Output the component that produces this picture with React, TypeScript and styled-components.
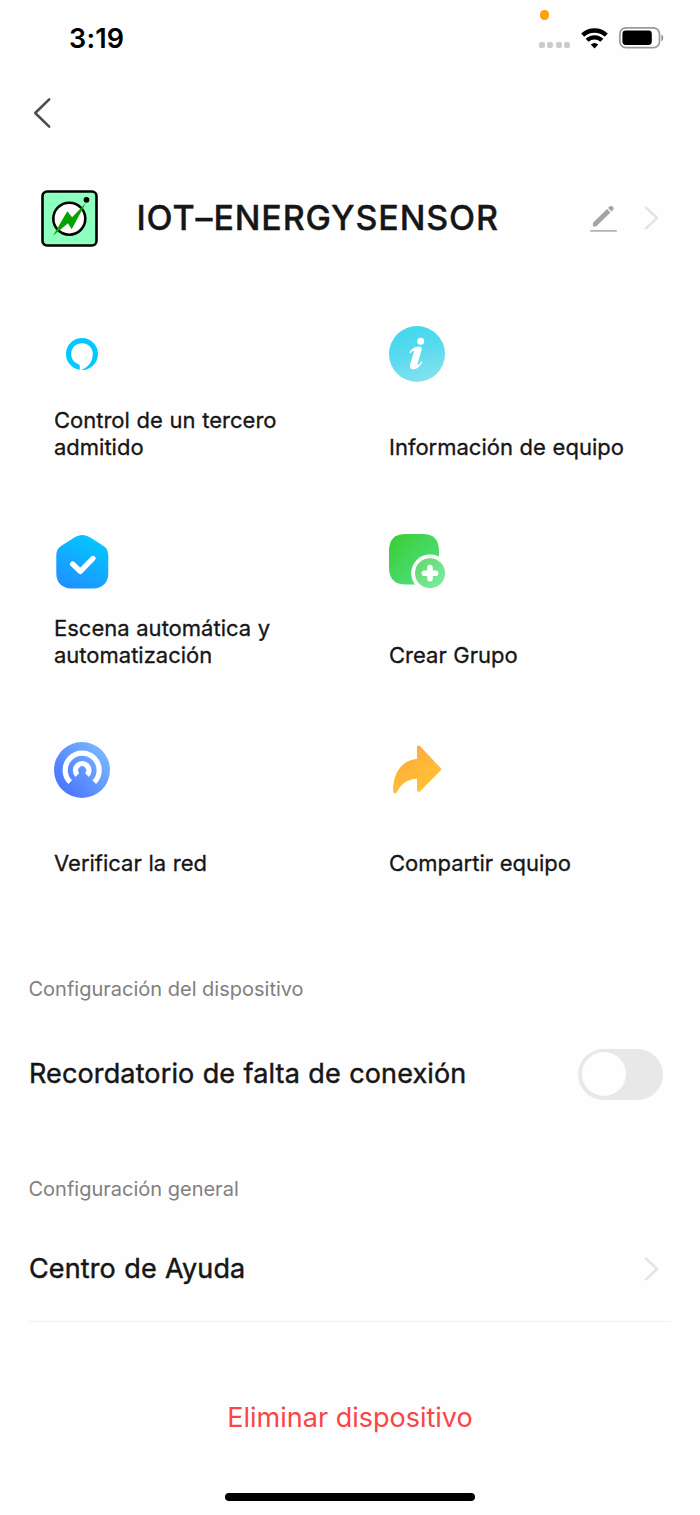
import React from "react";
import styled, { createGlobalStyle } from "styled-components";

const GlobalStyle = createGlobalStyle`
  *, *::before, *::after { box-sizing: border-box; }
  body {
    margin: 0;
    background: #fefefe;
    color: #161616;
    font-family: Inter, "Liberation Sans", sans-serif;
  }
  button {
    border: 0;
    padding: 0;
    background: none;
    color: inherit;
    font: inherit;
    text-align: left;
  }
  svg { display: block; flex: none; overflow: visible; }
`;

const Screen = styled.main`
  display: flex;
  flex-direction: column;
  width: 700px;
  height: 1515px;
  overflow: hidden;
`;

const StatusBar = styled.header`
  position: relative;
  display: flex;
  align-items: center;
  justify-content: space-between;
  height: 76px;
  padding: 0 36px 0 69px;
`;

const Clock = styled.time`
  color: #000;
  font-size: 27px;
  font-weight: 600;
  line-height: 32px;
  letter-spacing: 0.2px;
  padding-top: 2px;
`;

const StatusIcons = styled.div`
  display: flex;
  align-items: center;
  gap: 11px;
`;

const RecordingDot = styled.span`
  position: absolute;
  top: 10px;
  left: 539.5px;
  width: 9.5px;
  height: 9.5px;
  border-radius: 50%;
  background: #ff9f0a;
`;

const SignalDots = styled.span`
  display: flex;
  gap: 2.5px;
  margin-top: 14px;
`;

const SignalDot = styled.i`
  width: 6px;
  height: 6px;
  border-radius: 2px;
  background: #cbcbcb;
`;

const NavBar = styled.nav`
  display: flex;
  align-items: center;
  height: 74px;
  padding-left: 33px;
`;

const DeviceHeader = styled.section`
  display: flex;
  align-items: center;
  height: 136px;
  padding: 0 41px;
`;

const DeviceName = styled.h1`
  flex: 1;
  margin: 0 0 0 38.5px;
  font-size: 34px;
  font-weight: 500;
  line-height: 42px;
  letter-spacing: 0.85px;
  -webkit-text-stroke: 0.35px currentColor;
`;

const EditButton = styled.button`
  margin-right: 28px;
`;

const ActionGrid = styled.section`
  display: grid;
  grid-template-columns: 335px 1fr;
  row-gap: 73px;
  padding: 40px 54px 0;
`;

const Action = styled.button`
  display: flex;
  flex-direction: column;
  justify-content: space-between;
  align-items: flex-start;
  height: 135px;
`;

const ActionLabel = styled.span`
  max-width: 250px;
  font-size: 22px;
  font-weight: 400;
  line-height: 27px;
  word-spacing: 0.5px;
  -webkit-text-stroke: 0.3px currentColor;
`;

const SectionLabel = styled.h2<{ $top: number }>`
  margin: ${(p) => p.$top}px 0 0;
  padding-left: 28.5px;
  color: #808080;
  font-size: 20px;
  font-weight: 400;
  line-height: 26px;
`;

const SettingRow = styled.div<{ $divided?: boolean; $height: number }>`
  display: flex;
  align-items: center;
  justify-content: space-between;
  height: ${(p) => p.$height}px;
  margin: 0 29px 0 28px;
  padding: ${(p) => (p.$divided ? "14px 12px 0 1px" : "0 8px 0 1px")};
  border-bottom: ${(p) => (p.$divided ? "1.5px solid #f1f1f1" : "0")};
`;

const SettingTitle = styled.span`
  font-size: 27px;
  font-weight: 400;
  line-height: 34px;
  letter-spacing: 0.13px;
  word-spacing: 0.6px;
  -webkit-text-stroke: 0.45px currentColor;
`;

const Toggle = styled.button`
  display: flex;
  align-items: center;
  width: 85px;
  height: 51px;
  padding-left: 3.5px;
  border-radius: 26px;
  background: #e8e8e8;
`;

const ToggleKnob = styled.span`
  width: 44px;
  height: 44px;
  border-radius: 50%;
  background: #fefefe;
`;

const RemoveButton = styled.button`
  align-self: center;
  margin-top: 79px;
  color: #fb4545;
  font-size: 27px;
  font-weight: 400;
  line-height: 34px;
`;

const HomeIndicator = styled.div`
  align-self: center;
  width: 250px;
  height: 8px;
  margin-top: 58px;
  border-radius: 4px;
  background: #000;
`;

const WifiIcon = () => (
  <svg width="27" height="21" viewBox="0 0 27 21" fill="none" stroke="#000">
    <path d="M1.7 7.2a17 17 0 0 1 23.6 0" strokeWidth="4.4" />
    <path d="M6.1 12.3a10.6 10.6 0 0 1 14.8 0" strokeWidth="4.2" />
    <path d="M13.5 20.4 9.8 16.6q3.7-3 7.4 0z" fill="#000" stroke="none" />
  </svg>
);

const BatteryIcon = () => (
  <svg width="45" height="22" viewBox="0 0 45 22">
    <rect x="0.9" y="0.9" width="39.6" height="19.8" rx="6" fill="none" stroke="#9a9a9a" strokeWidth="1.7" />
    <rect x="3.4" y="3.6" width="29.4" height="14.4" rx="3.4" fill="#000" />
    <path d="M42.4 7.4c2.4 1 2.4 5.8 0 6.8z" fill="#8c8c8c" />
  </svg>
);

const BackIcon = () => (
  <svg width="18" height="30" viewBox="0 0 18 30" fill="none" stroke="#4b4b4b" strokeWidth="2.5" strokeLinecap="round" strokeLinejoin="round">
    <path d="M16.2 1.4 2.2 15l14 13.6" />
  </svg>
);

const ChevronIcon = () => (
  <svg width="14" height="24" viewBox="0 0 14 24" fill="none" stroke="#e4e4e4" strokeWidth="2.6" strokeLinecap="round" strokeLinejoin="round">
    <path d="M1 1.6 12 12 1 22.4" />
  </svg>
);

const PencilIcon = () => (
  <svg width="27" height="28" viewBox="0 0 27 28">
    <path d="M3.3 18.4 17 4.9l3.5 3.5L6.8 21.8q-.6.6-1.4.6H3.8q-.9 0-.9-.9v-1.7q0-.8.4-1.4z" fill="#a3a3a3" />
    <path d="m18 3.9 1.5-1.4c2.3-1.9 5.3 1.2 3.5 3.4l-1.5 1.5z" fill="#a3a3a3" />
    <rect y="25.9" width="27" height="1.9" rx=".9" fill="#b3b3b3" />
  </svg>
);

const DeviceIcon = () => (
  <svg width="57" height="57" viewBox="0 0 57 57">
    <rect x="1.5" y="1.5" width="54" height="54" rx="4.5" fill="#8dffbf" stroke="#000" strokeWidth="2.6" />
    <circle cx="28.3" cy="28.7" r="16" fill="#fefefe" stroke="#000" strokeWidth="2.6" />
    <path d="M44.8 13 30.7 39.3 27 33.2 12.2 45.6 26.3 21.2l4.8 6z" fill="#00a300" />
    <circle cx="45.5" cy="9.8" r="2.9" fill="#000" />
  </svg>
);

const VoiceIcon = () => (
  <svg width="56" height="56" viewBox="0 0 56 56">
    <path
      d="M25.8 43.85A16 16 0 0 1 28 12A16 16 0 0 1 44 28A16 16 0 0 1 26.7 43.95C33 42.6 38.6 36.5 38.8 28A10.8 10.8 0 0 0 28 17.2A10.8 10.8 0 0 0 17.2 28A10.8 10.8 0 0 0 23.4 37.8L24.9 38.5Q25.8 38.9 25.8 39.9z"
      fill="#05c8fc"
    />
  </svg>
);

const InfoIcon = () => (
  <svg width="56" height="56" viewBox="0 0 56 56">
    <defs>
      <linearGradient id="info" x1=".3" y1=".1" x2=".6" y2="1">
        <stop stopColor="#45d8ee" />
        <stop offset=".4" stopColor="#57daee" />
        <stop offset="1" stopColor="#86e1ee" />
      </linearGradient>
    </defs>
    <circle cx="28" cy="28" r="28" fill="url(#info)" />
    <circle cx="31.7" cy="15.2" r="3.5" fill="#fff" />
    <path d="M20.3 26.6c1.6-3.5 5.7-6.1 9.8-6.2 2.5 0 3.1 1.3 2.5 3.3l-3.9 13.600c-.6 2.300.6 2.300 3.700-1.900l1.100.7c-2.300 4.600-5.300 7.100-8.900 7.100-3.200 0-4.200-2.200-3.400-5L24.700 26.600c.7-2.400-.5-2.400-3.200.6z" fill="#fff" />
  </svg>
);

const SceneIcon = () => (
  <svg width="56" height="56" viewBox="0 0 56 56">
    <defs>
      <linearGradient id="scene" x1=".7" y1="0" x2=".2" y2="1">
        <stop stopColor="#02c9ff" />
        <stop offset="1" stopColor="#208fff" />
      </linearGradient>
    </defs>
    <path d="M2.3 22c0-5 1.6-8 5.500-10.400L20.300 3.500c5.500-3.400 10.500-3.400 16 0l12.500 8.100c3.900 2.400 5.500 5.400 5.500 10.400V39.500c0 9-5.800 14.900-14.800 14.900H17.100c-9 0-14.800-5.900-14.800-14.900z" fill="url(#scene)" />
    <path d="m18.6 30 7.7 7.4 12.6-12.9" fill="none" stroke="#fff" strokeWidth="5.3" strokeLinecap="round" strokeLinejoin="round" />
  </svg>
);

const GroupIcon = () => (
  <svg width="56" height="56" viewBox="0 0 56 56">
    <defs>
      <linearGradient id="group" x1="0" y1="0" x2="1" y2="1">
        <stop stopColor="#3bcb32" />
        <stop offset="1" stopColor="#50e58b" />
      </linearGradient>
      <linearGradient id="groupBadge" x1="0" y1="0" x2="1" y2="1">
        <stop stopColor="#65d667" />
        <stop offset="1" stopColor="#78f0a6" />
      </linearGradient>
    </defs>
    <path d="M0 17C0 5.5 5.5 0 17 0h16c11.5 0 17 5.5 17 17v16.5c0 11.5-5.5 17-17 17H17c-11.5 0-17-5.5-17-17z" fill="url(#group)" />
    <circle cx="41" cy="39.2" r="18.8" fill="#fefefe" />
    <circle cx="41" cy="39.2" r="15" fill="url(#groupBadge)" />
    <path d="M41 33.6v11.2M35.4 39.2h11.2" stroke="#fff" strokeWidth="5.6" strokeLinecap="round" />
  </svg>
);

const NetworkIcon = () => (
  <svg width="56" height="56" viewBox="0 0 56 56">
    <defs>
      <linearGradient id="network" x1=".95" y1=".2" x2=".2" y2=".85">
        <stop stopColor="#78b8ff" />
        <stop offset="1" stopColor="#4d78ff" />
      </linearGradient>
    </defs>
    <circle cx="28" cy="28" r="28" fill="url(#network)" />
    <g fill="none" stroke="#fff">
      <path d="M16.2 40.2a17 17 0 1 1 24 0" strokeWidth="5.2" />
      <path d="M23.4 33a6.7 6.7 0 1 1 9.6 0" strokeWidth="5.4" />
    </g>
  </svg>
);

const ShareIcon = () => (
  <svg width="56" height="56" viewBox="0 0 56 56">
    <defs>
      <linearGradient id="share" x1=".2" y1=".1" x2=".7" y2="1">
        <stop stopColor="#ffaa3b" />
        <stop offset="1" stopColor="#ffc535" />
      </linearGradient>
    </defs>
    <path d="M28 17V5.7c0-2.1 1.9-2.8 3.4-1.3l20.2 21.7c.8.9.8 1.6 0 2.5L31.4 49c-1.5 1.5-3.4.9-3.4-1.2v-11c-8.6.2-15.4 4.400-20 13-1.200 2.500-3.700 2-3.800-.7C3.800 31.500 12.500 18 28 17z" fill="url(#share)" />
  </svg>
);

const actions = [
  { label: "Control de un tercero admitido", Icon: VoiceIcon },
  { label: "Información de equipo", Icon: InfoIcon },
  { label: "Escena automática y automatización", Icon: SceneIcon },
  { label: "Crear Grupo", Icon: GroupIcon },
  { label: "Verificar la red", Icon: NetworkIcon },
  { label: "Compartir equipo", Icon: ShareIcon },
];

export default function App() {
  return (
    <>
      <GlobalStyle />
      <Screen>
        <StatusBar>
          <Clock>3:19</Clock>
          <RecordingDot />
          <StatusIcons>
            <SignalDots>
              {[0, 1, 2, 3].map((n) => (
                <SignalDot key={n} />
              ))}
            </SignalDots>
            <WifiIcon />
            <BatteryIcon />
          </StatusIcons>
        </StatusBar>
        <NavBar>
          <button aria-label="Atrás">
            <BackIcon />
          </button>
        </NavBar>
        <DeviceHeader>
          <DeviceIcon />
          <DeviceName>IOT–ENERGYSENSOR</DeviceName>
          <EditButton aria-label="Editar">
            <PencilIcon />
          </EditButton>
          <ChevronIcon />
        </DeviceHeader>
        <ActionGrid>
          {actions.map(({ label, Icon }) => (
            <Action key={label}>
              <Icon />
              <ActionLabel>{label}</ActionLabel>
            </Action>
          ))}
        </ActionGrid>
        <SectionLabel $top={99}>Configuración del dispositivo</SectionLabel>
        <SettingRow $height={144}>
          <SettingTitle>Recordatorio de falta de conexión</SettingTitle>
          <Toggle role="switch" aria-checked={false} aria-label="Recordatorio de falta de conexión">
            <ToggleKnob />
          </Toggle>
        </SettingRow>
        <SectionLabel $top={30}>Configuración general</SectionLabel>
        <SettingRow $height={120} $divided>
          <SettingTitle>Centro de Ayuda</SettingTitle>
          <ChevronIcon />
        </SettingRow>
        <RemoveButton>Eliminar dispositivo</RemoveButton>
        <HomeIndicator />
      </Screen>
    </>
  );
}
